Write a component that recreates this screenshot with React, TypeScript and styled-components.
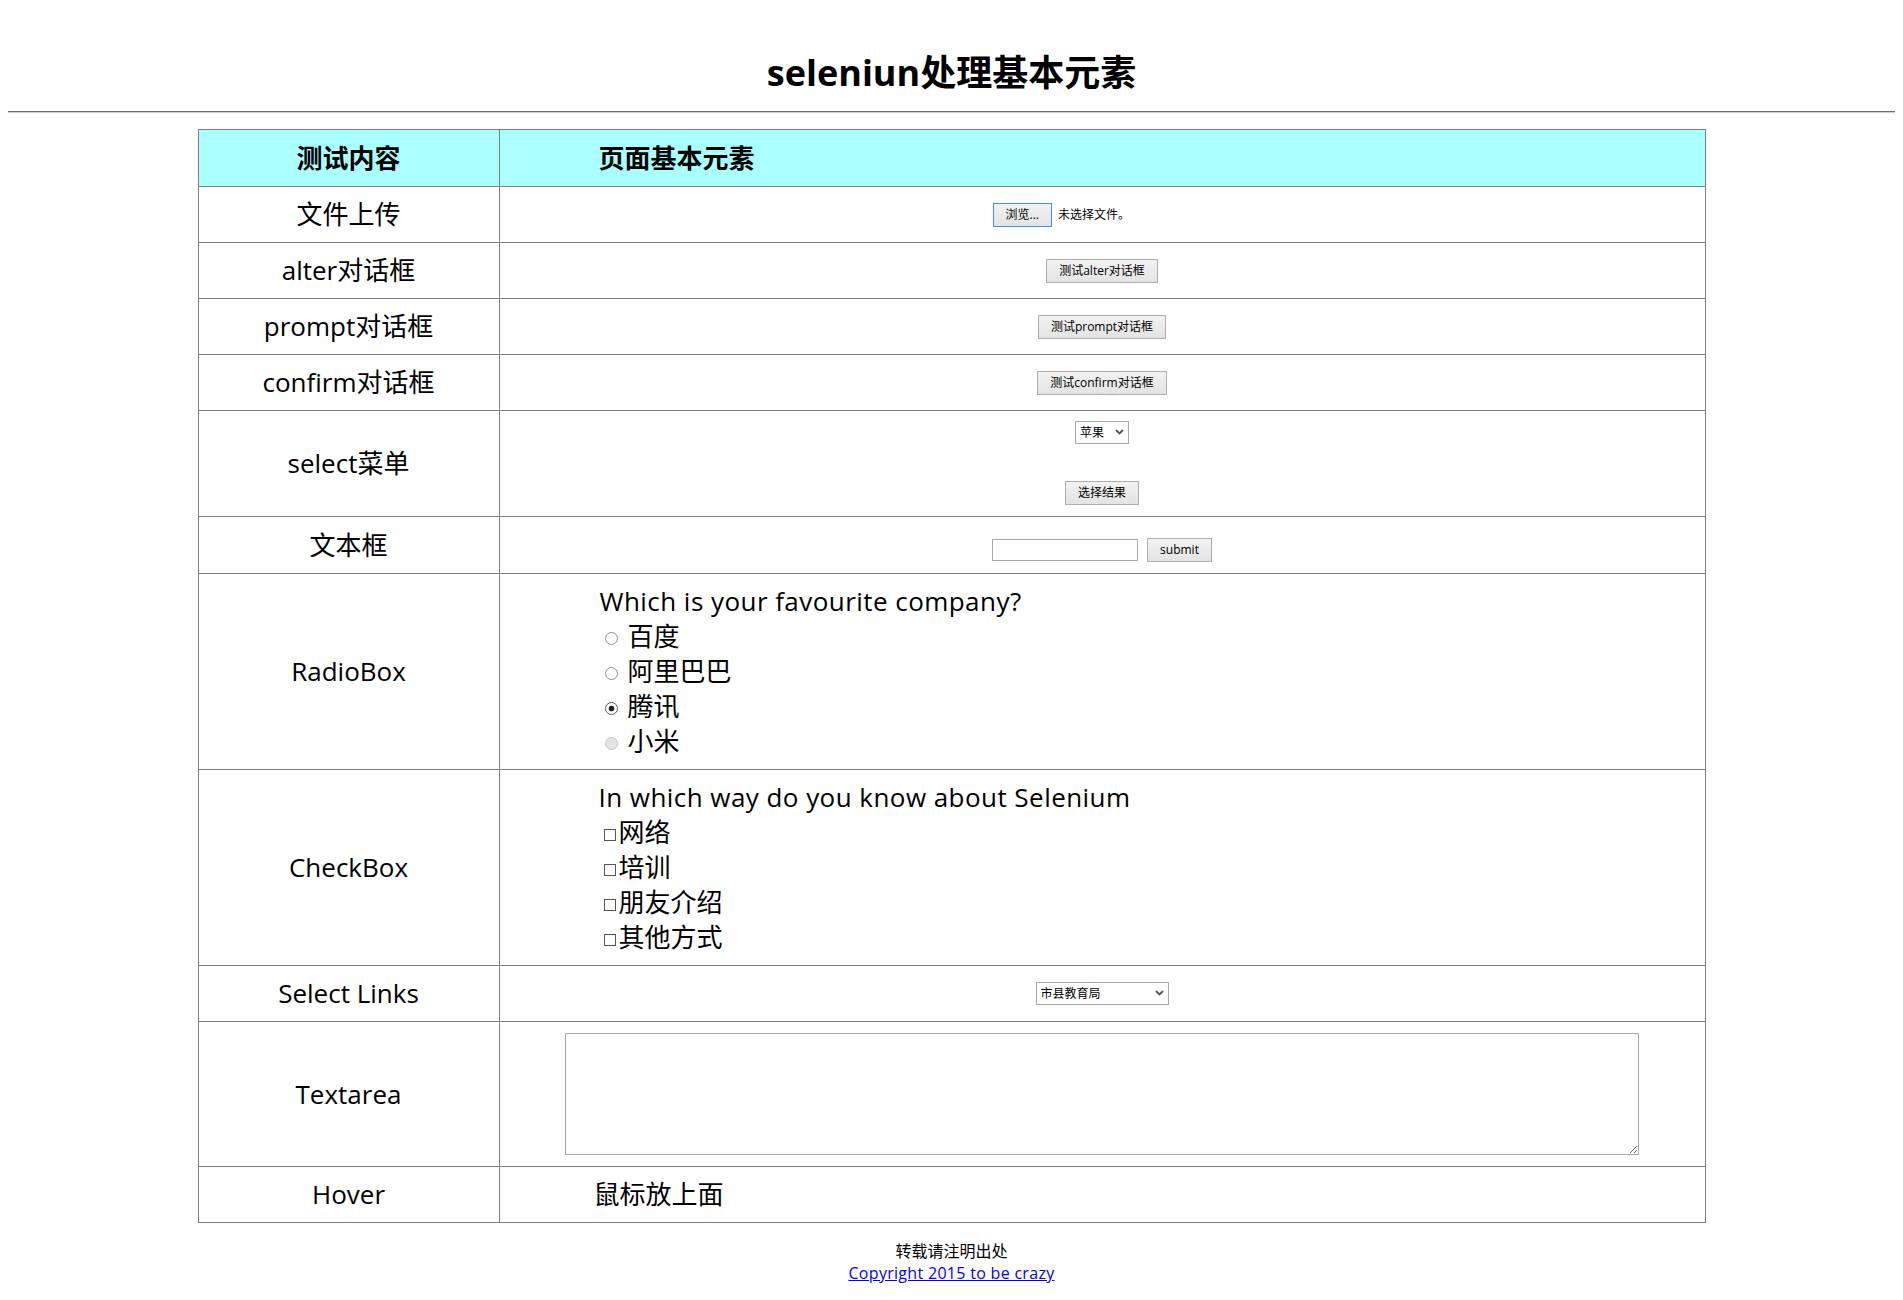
import React from "react";
import styled, { createGlobalStyle } from "styled-components";

const GlobalStyle = createGlobalStyle`
  body {
    margin: 8px;
    background: #ffffff;
    color: #000000;
    font-family: "Open Sans", "Noto Sans CJK SC", sans-serif;
  }
`;

const Title = styled.h1`
  margin: 41px 0 0;
  text-align: center;
  font-size: 36px;
  line-height: 48px;
  font-weight: 700;
`;

const Rule = styled.hr`
  margin: 14px 0 16px;
  height: 0;
  border: 0;
  border-top: 1px solid #6e6e6e;
  border-bottom: 1px solid #cfcfcf;
`;

const Table = styled.table`
  width: 1508px;
  margin: 0 auto;
  border-collapse: collapse;
  border: 1px solid #6a6a6a;
  font-size: 26px;
  line-height: 35px;
`;

const Head = styled.th<{ $left?: boolean }>`
  background: #aaffff;
  border: 1px solid #808080;
  padding: ${(p) => (p.$left ? "11px 0 10px 99px" : "11px 0 10px")};
  width: ${(p) => (p.$left ? "auto" : "300px")};
  text-align: ${(p) => (p.$left ? "left" : "center")};
  font-weight: 700;
`;

const Label = styled.td`
  border: 1px solid #808080;
  padding: 10px 0;
  text-align: center;
  vertical-align: middle;
`;

const Cell = styled.td<{ $pad?: string; $align?: string }>`
  border: 1px solid #808080;
  padding: ${(p) => p.$pad ?? "10px 0"};
  text-align: ${(p) => p.$align ?? "center"};
  vertical-align: middle;
`;

const Center = styled.div<{ $column?: boolean; $gap?: number }>`
  display: flex;
  flex-direction: ${(p) => (p.$column ? "column" : "row")};
  justify-content: center;
  align-items: center;
  gap: ${(p) => p.$gap ?? 0}px;
`;

const FileBox = styled.div`
  width: 219px;
  display: flex;
  align-items: center;
  gap: 6px;
  font-size: 12px;
  line-height: 16px;
`;

const Button = styled.button<{ $blue?: boolean }>`
  height: 24px;
  padding: 0 12px;
  margin: 0;
  border: 1px solid ${(p) => (p.$blue ? "#3c94e6" : "#adadad")};
  background: linear-gradient(#f2f2f2, #e3e3e3);
  font-family: "Open Sans", "Noto Sans CJK SC", sans-serif;
  font-size: 12px;
  line-height: 16px;
  color: #000;
  white-space: nowrap;
`;

const SelectWrap = styled.span`
  position: relative;
  display: inline-flex;
`;

const Select = styled.select<{ $w: number }>`
  appearance: none;
  -webkit-appearance: none;
  width: ${(p) => p.$w}px;
  height: 23px;
  margin: 0;
  padding: 0 0 0 4px;
  border: 1px solid #a9a9a9;
  border-radius: 0;
  background: #ffffff;
  color: #000;
  font-family: "Open Sans", "Noto Sans CJK SC", sans-serif;
  font-size: 12px;
`;

const Chevron = styled.svg`
  position: absolute;
  right: 5px;
  top: 8px;
  pointer-events: none;
`;

const TextInput = styled.input`
  box-sizing: border-box;
  width: 146px;
  height: 22px;
  margin: 0;
  padding: 0 3px;
  border: 1px solid #a9a9a9;
  background: #fff;
`;

const Line = styled.div`
  height: 35px;
  line-height: 35px;
  white-space: nowrap;
  letter-spacing: 0.45px;
`;

const ChoiceRow = styled.label<{ $gap: number; $indent: number }>`
  display: flex;
  align-items: center;
  height: 35px;
  gap: ${(p) => p.$gap}px;
  padding-left: ${(p) => p.$indent}px;
`;

const Radio = styled.input`
  appearance: none;
  -webkit-appearance: none;
  box-sizing: border-box;
  width: 13px;
  height: 13px;
  margin: 3px 0 0;
  border: 1px solid #8a8a8a;
  border-radius: 50%;
  background: #ffffff;
  &:checked {
    border-color: #555;
    background: radial-gradient(circle, #222 0 2.6px, #ffffff 3.2px);
  }
  &:disabled {
    border-color: #c4c4c4;
    background: #e4e4e4;
  }
`;

const Check = styled.input`
  appearance: none;
  -webkit-appearance: none;
  box-sizing: border-box;
  width: 12px;
  height: 12px;
  margin: 5px 0 0;
  border: 1px solid #555555;
  border-radius: 0;
  background: #ffffff;
`;

const TextArea = styled.textarea`
  display: block;
  box-sizing: border-box;
  width: 1074px;
  height: 122px;
  margin: 0 auto;
  border: 1px solid #a9a9a9;
  background: #fff;
`;

const Footer = styled.div`
  margin-top: 17px;
  text-align: center;
  font-size: 16px;
  line-height: 22px;
`;

const Link = styled.a`
  color: #0000ee;
  text-decoration: underline;
  letter-spacing: 0.3px;
`;

const ChevronIcon = () => (
  <Chevron width="9" height="6" viewBox="0 0 9 6">
    <polyline points="1,1 4.5,4.5 8,1" fill="none" stroke="#555" strokeWidth="1.8" />
  </Chevron>
);

export default function App() {
  return (
    <>
      <GlobalStyle />
      <Title>seleniun处理基本元素</Title>
      <Rule />
      <Table>
        <thead>
          <tr>
            <Head>测试内容</Head>
            <Head $left>页面基本元素</Head>
          </tr>
        </thead>
        <tbody>
          <tr>
            <Label>文件上传</Label>
            <Cell>
              <Center>
                <FileBox>
                  <Button $blue>浏览...</Button>
                  <span>未选择文件。</span>
                </FileBox>
              </Center>
            </Cell>
          </tr>
          <tr>
            <Label>alter对话框</Label>
            <Cell>
              <Center>
                <Button>测试alter对话框</Button>
              </Center>
            </Cell>
          </tr>
          <tr>
            <Label>prompt对话框</Label>
            <Cell>
              <Center>
                <Button>测试prompt对话框</Button>
              </Center>
            </Cell>
          </tr>
          <tr>
            <Label>confirm对话框</Label>
            <Cell>
              <Center>
                <Button>测试confirm对话框</Button>
              </Center>
            </Cell>
          </tr>
          <tr>
            <Label>select菜单</Label>
            <Cell $pad="10px 0 11px">
              <Center $column $gap={37}>
                <SelectWrap>
                  <Select $w={54} defaultValue="apple">
                    <option value="apple">苹果</option>
                    <option value="pear">桃子</option>
                    <option value="banana">香蕉</option>
                  </Select>
                  <ChevronIcon />
                </SelectWrap>
                <Button>选择结果</Button>
              </Center>
            </Cell>
          </tr>
          <tr>
            <Label>文本框</Label>
            <Cell $pad="21px 0 11px">
              <Center $gap={9}>
                <TextInput type="text" />
                <Button>submit</Button>
              </Center>
            </Cell>
          </tr>
          <tr>
            <Label>RadioBox</Label>
            <Cell $pad="10px 0 10px 100px" $align="left">
              <Line>Which is your favourite company?</Line>
              <ChoiceRow $gap={10} $indent={5}>
                <Radio type="radio" name="company" />
                百度
              </ChoiceRow>
              <ChoiceRow $gap={10} $indent={5}>
                <Radio type="radio" name="company" />
                阿里巴巴
              </ChoiceRow>
              <ChoiceRow $gap={10} $indent={5}>
                <Radio type="radio" name="company" defaultChecked />
                腾讯
              </ChoiceRow>
              <ChoiceRow $gap={10} $indent={5}>
                <Radio type="radio" name="company" disabled />
                小米
              </ChoiceRow>
            </Cell>
          </tr>
          <tr>
            <Label>CheckBox</Label>
            <Cell $pad="10px 0 10px 99px" $align="left">
              <Line>In which way do you know about Selenium</Line>
              <ChoiceRow $gap={3} $indent={5}>
                <Check type="checkbox" />
                网络
              </ChoiceRow>
              <ChoiceRow $gap={3} $indent={5}>
                <Check type="checkbox" />
                培训
              </ChoiceRow>
              <ChoiceRow $gap={3} $indent={5}>
                <Check type="checkbox" />
                朋友介绍
              </ChoiceRow>
              <ChoiceRow $gap={3} $indent={5}>
                <Check type="checkbox" />
                其他方式
              </ChoiceRow>
            </Cell>
          </tr>
          <tr>
            <Label>Select Links</Label>
            <Cell>
              <Center>
                <SelectWrap>
                  <Select $w={133} defaultValue="edu">
                    <option value="edu">市县教育局</option>
                  </Select>
                  <ChevronIcon />
                </SelectWrap>
              </Center>
            </Cell>
          </tr>
          <tr>
            <Label>Textarea</Label>
            <Cell $pad="11px 0">
              <TextArea />
            </Cell>
          </tr>
          <tr>
            <Label>Hover</Label>
            <Cell $pad="10px 0 10px 94px" $align="left">
              鼠标放上面
            </Cell>
          </tr>
        </tbody>
      </Table>
      <Footer>
        <div>转载请注明出处</div>
        <Link href="#">Copyright 2015 to be crazy</Link>
      </Footer>
    </>
  );
}
